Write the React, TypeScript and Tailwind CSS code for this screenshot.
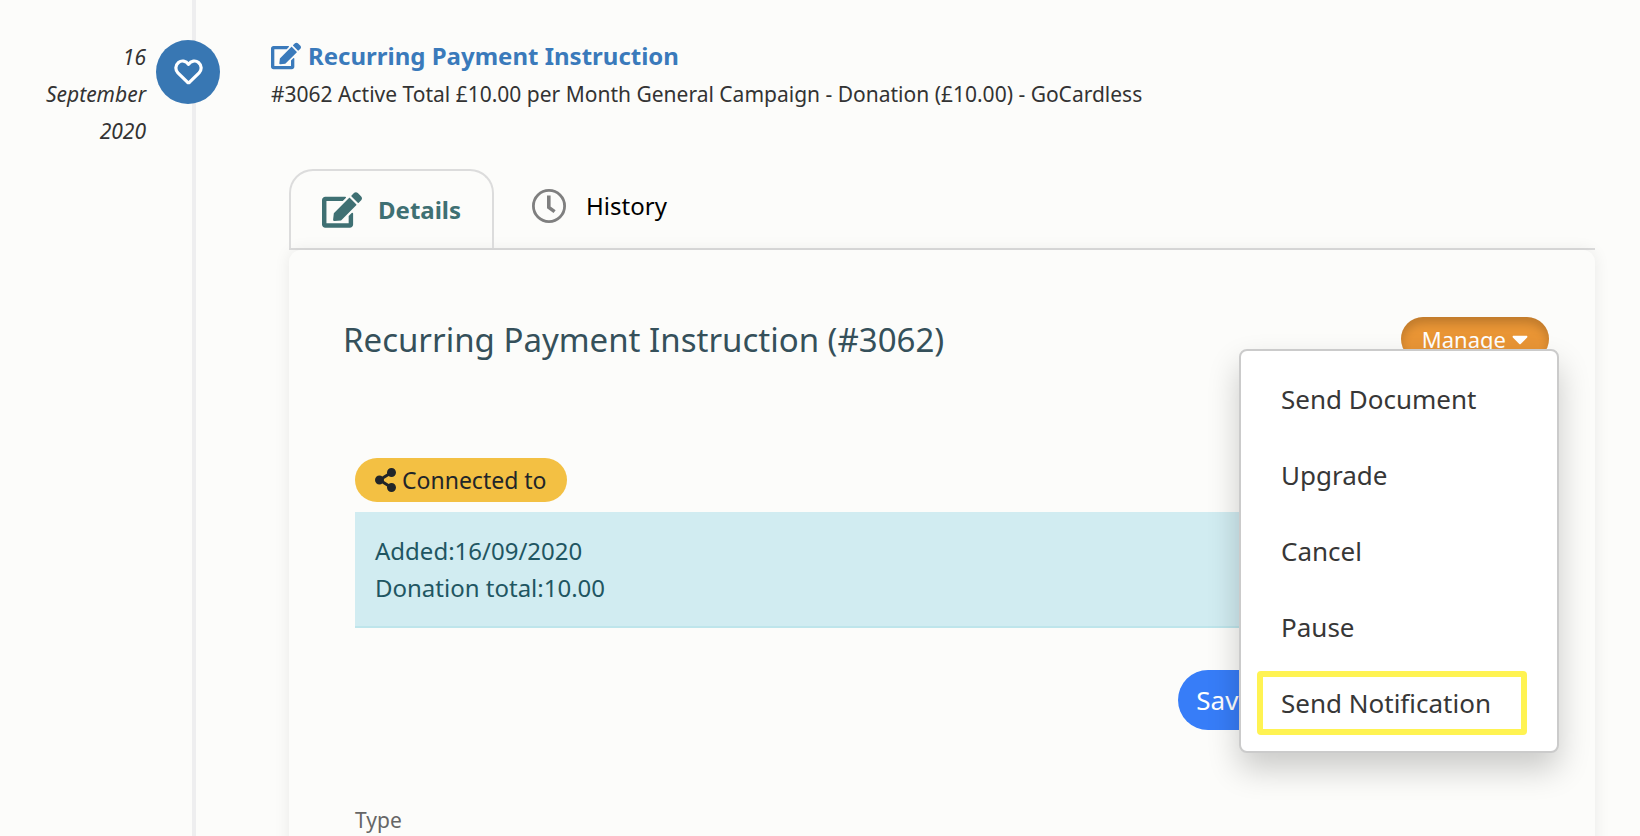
import { FaCaretDown, FaEdit, FaShareAlt } from "react-icons/fa";

const menuItems = ["Send Document", "Upgrade", "Cancel", "Pause", "Send Notification"];

function HeartIcon() {
  return (
    <svg viewBox="0 0 29 26" className="h-[26px] w-[29px]" fill="none" stroke="currentColor" aria-hidden="true">
      <path
        d="M14.5 5.4C12 1.6 7.4 1 4.5 3.5C1.2 6.4 1 10.9 3.9 13.9L13.4 23.2Q14.5 24.2 15.6 23.2L25.1 13.9C28 10.9 27.8 6.4 24.5 3.5C21.6 1 17 1.6 14.5 5.4Z"
        strokeWidth="3.2"
        strokeLinejoin="round"
      />
    </svg>
  );
}

function ClockIcon() {
  return (
    <svg viewBox="0 0 34 34" className="size-[34px]" fill="none" stroke="currentColor" aria-hidden="true">
      <circle cx="17" cy="17" r="15.6" strokeWidth="2.8" />
      <path d="M16.8 6.6v11.8l5.8 4.2" strokeWidth="3.6" />
    </svg>
  );
}

function DateMarker() {
  return (
    <div className="relative w-[226px] shrink-0">
      <div className="absolute inset-y-0 left-[192px] w-1 bg-[#eeeeef]" />
      <time dateTime="2020-09-16" className="block w-[146px] pt-[39px] text-right text-[21px] leading-[37px] italic">
        16
        <br />
        September
        <br />
        2020
      </time>
      <span className="absolute top-10 left-[156px] flex size-16 items-center justify-center rounded-full bg-[#3877b3] text-white">
        <HeartIcon />
      </span>
    </div>
  );
}

function Tabs() {
  return (
    <div role="tablist" className="flex border-b-2 border-[#dcdcdc]">
      <button
        role="tab"
        aria-selected="true"
        className="flex h-[79px] items-center gap-4 rounded-t-[24px] border-2 border-b-0 border-[#dcdcdc] px-[31px] text-2xl font-bold text-[#3f7073]"
      >
        <FaEdit className="size-10" />
        Details
      </button>
      <button role="tab" aria-selected="false" className="flex h-[74px] items-center gap-5 px-[38px] text-2xl text-black">
        <span className="text-[#7f7f7f]">
          <ClockIcon />
        </span>
        History
      </button>
    </div>
  );
}

function ManageMenu() {
  return (
    <div className="relative">
      <button
        aria-haspopup="menu"
        aria-expanded="true"
        className="flex h-11 items-center gap-[6px] rounded-full bg-[#e99535] px-[21px] text-[22px] text-white shadow-[inset_0_6px_10px_rgba(0,0,0,0.18)]"
      >
        Manage
        <FaCaretDown className="h-[26px] w-4" />
      </button>
      <div
        role="menu"
        className="absolute top-8 -right-[10px] z-10 flex w-[320px] flex-col gap-[12px] rounded-lg border-2 border-[#cbcbcb] bg-white py-4 pr-[30px] pl-[16px] shadow-[0_16px_32px_rgba(0,0,0,0.2)]"
      >
        {menuItems.map((item) => (
          <button
            key={item}
            role="menuitem"
            className="h-16 border-[6px] border-transparent pl-[18px] text-left text-[26px] text-[#373737] last:rounded-sm last:border-[#fff352]"
          >
            {item}
          </button>
        ))}
      </div>
    </div>
  );
}

export default function App() {
  return (
    <div className="flex h-screen overflow-hidden bg-[#fcfcfa] font-['Noto_Sans','Open_Sans',sans-serif] text-[#333]">
      <DateMarker />
      <main className="min-w-0 flex-1 pt-[36px] pr-[45px] pl-[45px]">
        <h1 className="text-2xl leading-10 font-bold text-[#3a7abb]">
          <a href="#instruction" className="flex items-center gap-[7px]">
            <FaEdit className="size-[30px]" />
            Recurring Payment Instruction
          </a>
        </h1>
        <p className="text-[21px] leading-9">
          #3062 Active Total £10.00 per Month General Campaign - Donation (£10.00) - GoCardless
        </p>
        <div className="mt-[57px] ml-[18px]">
          <Tabs />
          <section className="min-h-screen rounded-xl pt-[67px] pr-[46px] pl-[54px] shadow-[0_0_16px_rgba(0,0,0,0.08)]">
            <div className="flex items-start justify-between">
              <h2 className="text-[33px] leading-[46px] text-[#35505a]">Recurring Payment Instruction (#3062)</h2>
              <ManageMenu />
            </div>
            <div className="px-3 pt-[95px]">
              <button className="flex h-11 items-center gap-[6px] rounded-full bg-[#f3c043] px-5 text-[23px] text-[#212529]">
                <FaShareAlt className="h-6 w-[21px]" />
                Connected to
              </button>
              <div className="mt-[10px] border-b-2 border-[#bee5eb] bg-[#d1ecf1] p-5 text-2xl leading-[37px] text-[#1f5662]">
                <p>Added:16/09/2020</p>
                <p>Donation total:10.00</p>
              </div>
              <div className="flex justify-end pt-[42px] pr-[266px]">
                <button className="h-[60px] rounded-full bg-[#377df8] px-[18px] text-[26px] text-white">Save</button>
              </div>
              <label htmlFor="type" className="mt-[74px] block text-[21px] leading-8 text-[#666]">
                Type
              </label>
              <input id="type" className="mt-2 w-full border border-[#ccc] p-3" />
            </div>
          </section>
        </div>
      </main>
    </div>
  );
}
